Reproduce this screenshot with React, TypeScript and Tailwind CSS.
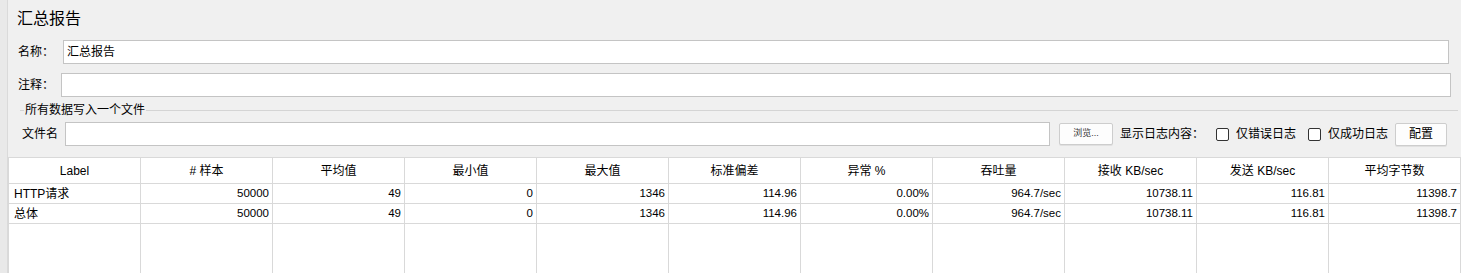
import React from 'react';

const columns = ['Label', '# 样本', '平均值', '最小值', '最大值', '标准偏差', '异常 %', '吞吐量', '接收 KB/sec', '发送 KB/sec', '平均字节数'];

const rows = [
  ['HTTP请求', '50000', '49', '0', '1346', '114.96', '0.00%', '964.7/sec', '10738.11', '116.81', '11398.7'],
  ['总体', '50000', '49', '0', '1346', '114.96', '0.00%', '964.7/sec', '10738.11', '116.81', '11398.7'],
];

const font = { fontFamily: '"Liberation Sans", "Noto Sans CJK SC", sans-serif' };

function Checkbox() {
  return <span className="w-[13px] h-[13px] border border-[#333333] rounded-[2px] bg-white shrink-0" />;
}

export default function App() {
  return (
    <div className="w-[1461px] h-[273px] bg-[#f0f0f0] flex overflow-hidden text-black" style={font}>
      <div className="w-[8px] h-full bg-[#e9e9e9] border-r border-[#dadada] shrink-0" />
      <div className="flex-1 flex flex-col">
        <div className="h-[40px] pl-[9px] pt-[8px] text-[16px] leading-[22px]">汇总报告</div>

        <div className="flex items-center h-[24px] pl-[10px]">
          <span className="w-[45px] text-[12px]">名称：</span>
          <div className="w-[1386px] h-[24px] bg-white border border-[#c4c4c4] flex items-center pl-[3px] text-[12px]">
            汇总报告
          </div>
        </div>

        <div className="flex items-center h-[24px] pl-[10px] mt-[9px]">
          <span className="w-[43px] text-[12px]">注释：</span>
          <div className="w-[1390px] h-[24px] bg-white border border-[#c4c4c4]" />
        </div>

        <div className="flex items-center h-[15px] mt-[6px] pl-[12px] pr-[3px]">
          <div className="w-[4px] h-px bg-[#d4d4d4]" />
          <span className="px-[1px] text-[12px] leading-[15px]">所有数据写入一个文件</span>
          <div className="flex-1 h-px bg-[#d4d4d4]" />
        </div>

        <div className="flex items-center h-[24px] mt-[4px] pl-[14px]">
          <span className="w-[43px] text-[12px]">文件名</span>
          <div className="w-[985px] h-[24px] bg-white border border-[#c4c4c4]" />
          <button className="ml-[9px] w-[54px] h-[22px] bg-[#fdfdfd] border border-[#cdcdcd] rounded-[2px] shadow-[0_1px_0_#e0e0e0] text-[9px] text-[#333]">
            浏览...
          </button>
          <span className="ml-[7px] text-[12px]">显示日志内容：</span>
          <span className="ml-[12px] flex items-center"><Checkbox /></span>
          <span className="ml-[7px] text-[12px]">仅错误日志</span>
          <span className="ml-[12px] flex items-center"><Checkbox /></span>
          <span className="ml-[7px] text-[12px]">仅成功日志</span>
          <button className="ml-[7px] w-[52px] h-[23px] bg-[#fdfdfd] border border-[#cdcdcd] rounded-[2px] shadow-[0_1px_0_#e0e0e0] text-[12px]">
            配置
          </button>
        </div>

        <div className="mt-[11px] flex-1 bg-white border-t border-l border-[#d9d9d9] flex flex-col">
          <div className="grid grid-cols-[repeat(11,132px)] h-[26px]">
            {columns.map((c) => (
              <div key={c} className="border-r border-b border-[#d9d9d9] flex items-center justify-center text-[12px] pt-[1px]">
                {c}
              </div>
            ))}
          </div>
          {rows.map((r, ri) => (
            <div key={ri} className="grid grid-cols-[repeat(11,132px)] h-[20px]">
              {r.map((v, i) => (
                <div
                  key={i}
                  className={`border-r border-b border-[#d9d9d9] flex items-center ${i === 0 ? 'justify-start pl-[5px] text-[12px]' : 'justify-end pr-[3px] text-[11.5px]'}`}
                >
                  {v}
                </div>
              ))}
            </div>
          ))}
          <div className="grid grid-cols-[repeat(11,132px)] flex-1">
            {columns.map((c) => (
              <div key={c} className="border-r border-[#d9d9d9]" />
            ))}
          </div>
        </div>
      </div>
    </div>
  );
}
